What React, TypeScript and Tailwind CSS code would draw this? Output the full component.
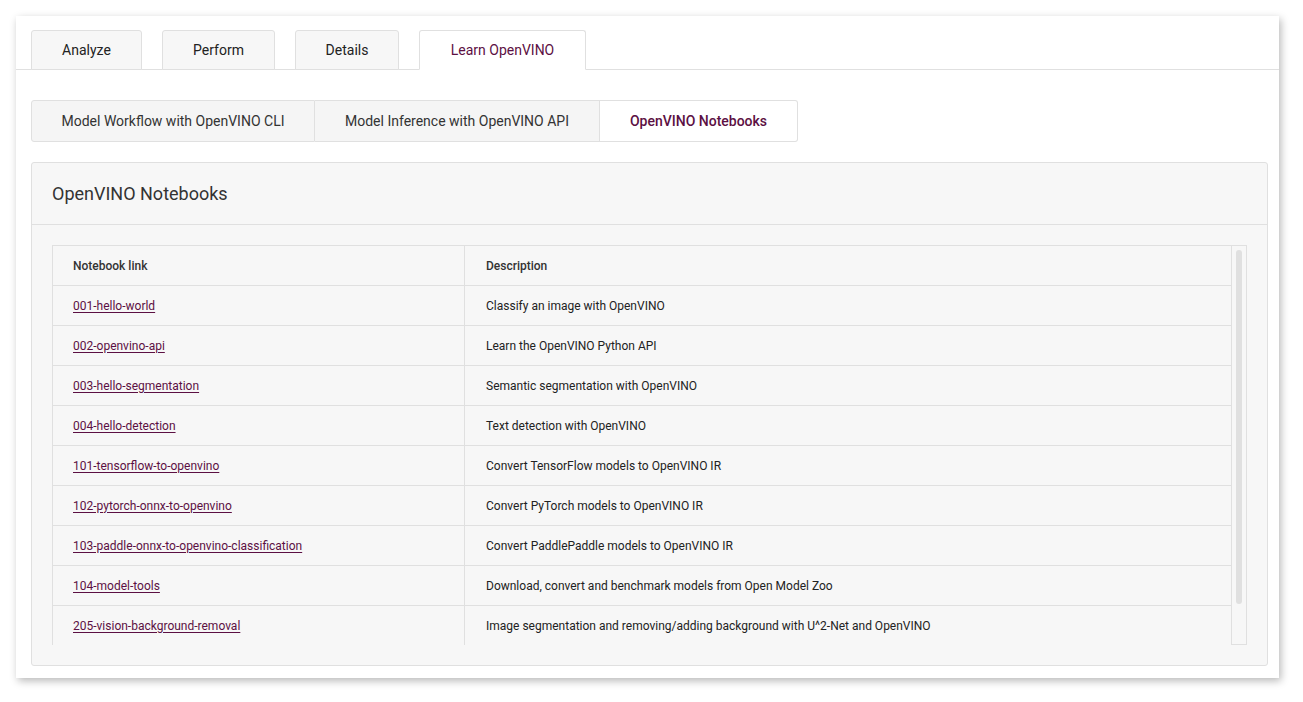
import type { FC } from 'react';

const tabs = [
  { label: 'Analyze', w: 'w-[111px]' },
  { label: 'Perform', w: 'w-[113px]' },
  { label: 'Details', w: 'w-[104px]' },
  { label: 'Learn OpenVINO', w: 'w-[167px]', active: true },
];

const subTabs = [
  { label: 'Model Workflow with OpenVINO CLI', w: 'w-[284px]' },
  { label: 'Model Inference with OpenVINO API', w: 'w-[285px]' },
  { label: 'OpenVINO Notebooks', w: 'w-[198px]', active: true },
];

const notebooks = [
  ['001-hello-world', 'Classify an image with OpenVINO'],
  ['002-openvino-api', 'Learn the OpenVINO Python API'],
  ['003-hello-segmentation', 'Semantic segmentation with OpenVINO'],
  ['004-hello-detection', 'Text detection with OpenVINO'],
  ['101-tensorflow-to-openvino', 'Convert TensorFlow models to OpenVINO IR'],
  ['102-pytorch-onnx-to-openvino', 'Convert PyTorch models to OpenVINO IR'],
  ['103-paddle-onnx-to-openvino-classification', 'Convert PaddlePaddle models to OpenVINO IR'],
  ['104-model-tools', 'Download, convert and benchmark models from Open Model Zoo'],
  ['205-vision-background-removal', 'Image segmentation and removing/adding background with U^2-Net and OpenVINO'],
];

const NotebooksTable: FC = () => (
  <div className="flex h-[400px] border-t border-l border-[#e0e0e0]">
    <div className="flex-1 overflow-hidden border-r border-[#e0e0e0]">
      <div className="flex h-10 items-center border-b border-[#e0e0e0] text-[12px] font-medium text-[#333]">
        <div className="w-[412px] h-full flex items-center pl-5 border-r border-[#e0e0e0]">Notebook link</div>
        <div className="flex-1 pl-[21px]">Description</div>
      </div>
      {notebooks.map(([link, desc]) => (
        <div key={link} className="flex h-10 items-center border-b border-[#e0e0e0] text-[12px] text-[#222]">
          <div className="w-[412px] h-full flex items-center pl-5 border-r border-[#e0e0e0]">
            <a href="#" className="text-[#5c1043] underline underline-offset-2 decoration-[#5c1043]">{link}</a>
          </div>
          <div className="flex-1 pl-[21px]">{desc}</div>
        </div>
      ))}
    </div>
    <div className="w-[15px] border-r border-b border-[#e0e0e0] pt-[4px] flex justify-center">
      <div className="w-[6px] h-[354px] rounded-full bg-[#e0e0e0]" />
    </div>
  </div>
);

export default function App() {
  return (
    <div className="min-h-screen bg-white pt-4 pl-4 font-['Roboto',sans-serif]">
      <div className="w-[1263px] h-[662px] bg-white shadow-[2px_3px_8px_rgba(0,0,0,0.28)] pt-[14px]">
        <div className="flex gap-[20px] pl-[15px] border-b border-[#e0e0e0]">
          {tabs.map((t) => (
            <div
              key={t.label}
              className={`${t.w} h-[40px] -mb-px flex items-center justify-center text-[14px] rounded-t-[3px] border border-[#e0e0e0] ${
                t.active ? 'bg-white border-b-white text-[#5c1043]' : 'bg-[#f7f7f7] text-[#222]'
              }`}
            >
              {t.label}
            </div>
          ))}
        </div>

        <div className="pl-[15px] pt-[30px]">
          <div className="flex">
            {subTabs.map((s, i) => (
              <div
                key={s.label}
                className={`${s.w} h-[42px] flex items-center justify-center text-[14px] border-y border-r border-[#e0e0e0] ${
                  i === 0 ? 'border-l rounded-l-[3px]' : ''
                } ${i === subTabs.length - 1 ? 'rounded-r-[3px]' : ''} ${
                  s.active ? 'bg-white text-[#5c1043] font-medium' : 'bg-[#f5f5f5] text-[#333]'
                }`}
              >
                {s.label}
              </div>
            ))}
          </div>

          <div className="mt-[20px] w-[1237px] h-[504px] bg-[#f7f7f7] border border-[#e0e0e0] rounded-[3px]">
            <div className="h-[62px] flex items-center pl-5 border-b border-[#e0e0e0] text-[18px] text-[#333]">
              OpenVINO Notebooks
            </div>
            <div className="pt-5 pl-5 pr-[20px]">
              <NotebooksTable />
            </div>
          </div>
        </div>
      </div>
    </div>
  );
}
